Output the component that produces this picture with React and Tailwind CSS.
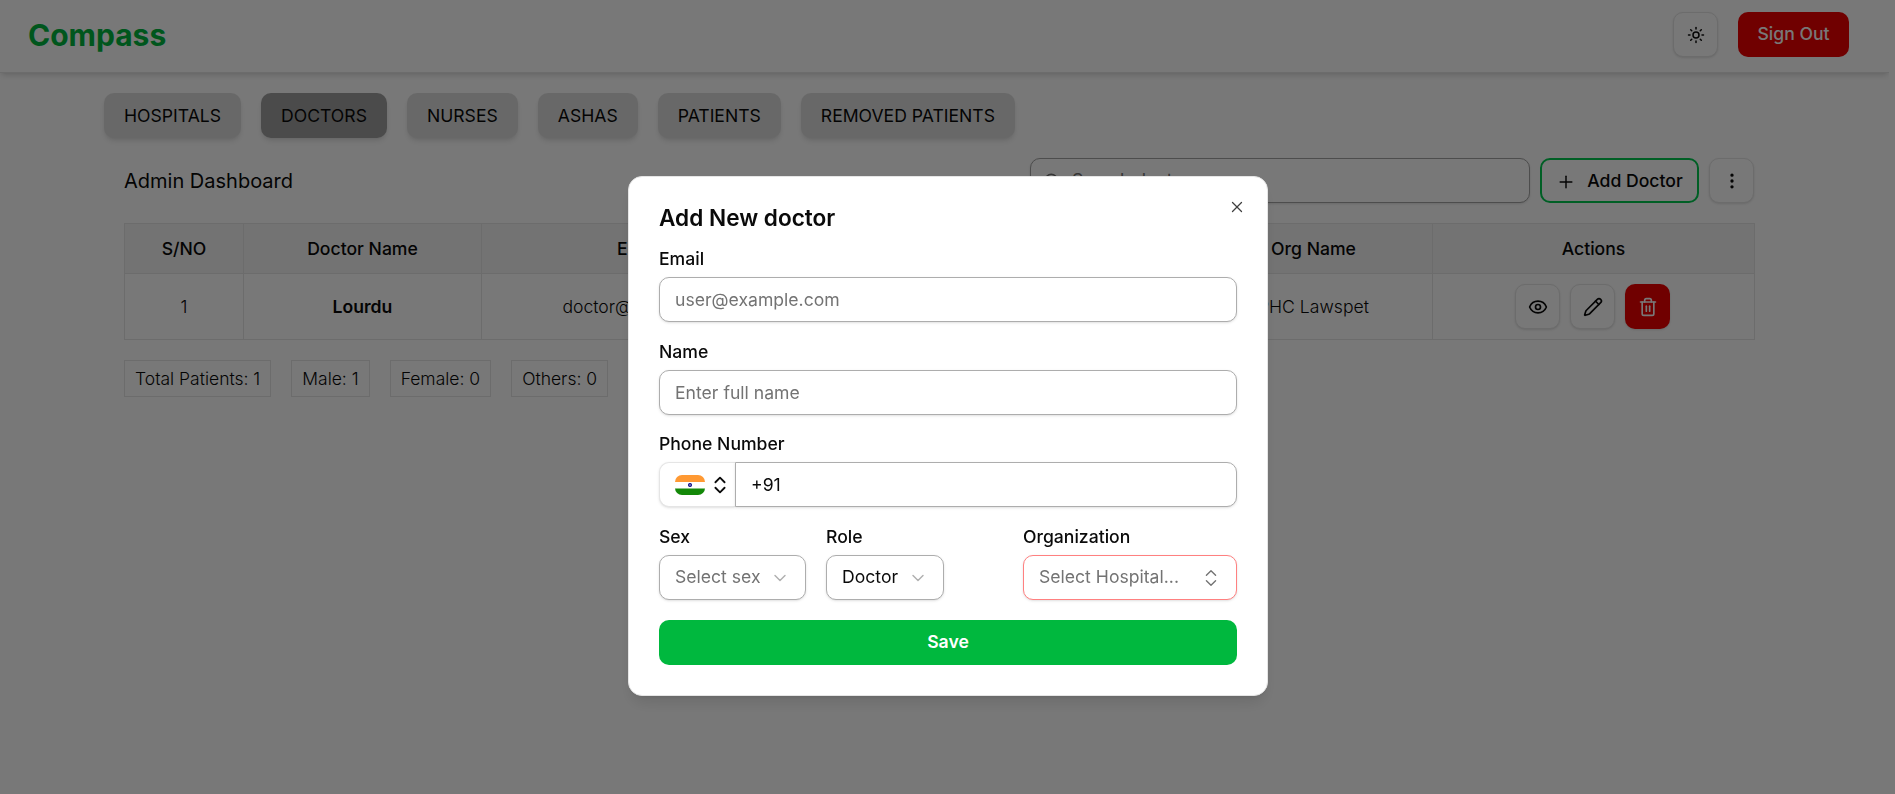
import React from 'react';
import { ChevronDown, ChevronsUpDown, EllipsisVertical, Eye, Pencil, Plus, Search, Sun, Trash2, X } from 'lucide-react';

const tabs = ['HOSPITALS', 'DOCTORS', 'NURSES', 'ASHAS', 'PATIENTS', 'REMOVED PATIENTS'];
const stats = ['Total Patients: 1', 'Male: 1', 'Female: 0', 'Others: 0'];
const columns = [
    { name: 'S/NO', width: 'w-[119px]' },
    { name: 'Doctor Name', width: 'w-[238px]' },
    { name: 'Email', width: 'w-[316px]' },
    { name: 'Phone', width: 'w-[203px]' },
    { name: 'Sex', width: 'w-[100px]' },
    { name: 'Role', width: 'w-[94px]' },
    { name: 'Org Name', width: 'w-[238px]' },
    { name: 'Actions', width: 'w-[322px]' },
];

const IconButton = ({ children, className = 'border border-[#e5e5e5] bg-white' }) => (
    <button className={`flex h-[45px] w-[45px] items-center justify-center rounded-[10px] shadow-sm ${className}`}>
        {children}
    </button>
);

const Field = ({ label, children, className = '' }) => (
    <div className={className}>
        <label className="block h-[25px] text-[17.6px] leading-[25px] font-medium text-[#0a0a0a]">{label}</label>
        <div className="mt-[6px]">{children}</div>
    </div>
);

const TextInput = ({ placeholder }) => (
    <input
        placeholder={placeholder}
        className="h-[45px] w-full rounded-[10px] border border-[#adadad] bg-white px-[15px] text-[17.6px] text-[#0a0a0a] shadow-sm outline-none placeholder:text-[#737373]"
    />
);

const SelectBox = ({ text, muted, className = '', icon }) => (
    <button className={`flex h-[45px] items-center justify-between rounded-[10px] border bg-white text-[17.6px] shadow-sm ${className}`}>
        <span className={`whitespace-nowrap ${muted ? 'text-[#737373]' : 'text-[#0a0a0a]'}`}>{text}</span>
        {icon}
    </button>
);

const IndiaFlag = () => (
    <svg viewBox="0 0 30 20" className="h-5 w-[30px] rounded-[7px]">
        <rect width="30" height="7" fill="#ff9933" />
        <rect y="7" width="30" height="6.5" fill="#ffffff" />
        <rect y="13.5" width="30" height="6.5" fill="#138808" />
        <circle cx="15" cy="10" r="2" fill="#000080" />
        <circle cx="15" cy="10" r="0.7" fill="#ffffff" />
    </svg>
);

const AddDoctorDialog = () => (
    <div className="fixed inset-0 z-50 bg-black/[0.53]">
        <div className="absolute top-[176px] left-[628px] w-[640px] rounded-[14px] border border-[#e5e5e5] bg-white px-[30px] pt-[26px] pb-[30px] shadow-lg">
            <button className="absolute top-[21px] right-[21px] text-[#404040]">
                <X className="h-[18px] w-[18px]" strokeWidth={1.75} />
            </button>
            <h2 className="h-[30px] text-[22.6px] leading-[30px] font-semibold text-[#0a0a0a]">Add New doctor</h2>
            <Field label="Email" className="mt-[13px]">
                <TextInput placeholder="user@example.com" />
            </Field>
            <Field label="Name" className="mt-[17px]">
                <TextInput placeholder="Enter full name" />
            </Field>
            <Field label="Phone Number" className="mt-4">
                <div className="flex h-[45px]">
                    <button className="flex w-[76px] items-center gap-1 rounded-l-[10px] border border-r-0 border-[#e5e5e5] bg-white pl-[15px] shadow-sm">
                        <IndiaFlag />
                        <ChevronsUpDown className="h-[22px] w-[22px] shrink-0 text-[#0a0a0a]" />
                    </button>
                    <input
                        defaultValue="+91"
                        className="h-[45px] flex-1 rounded-r-[10px] border border-[#adadad] bg-white px-[15px] text-[17.6px] text-[#0a0a0a] shadow-sm outline-none"
                    />
                </div>
            </Field>
            <div className="mt-[17px] flex">
                <Field label="Sex" className="w-[167px]">
                    <SelectBox
                        text="Select sex"
                        muted
                        className="w-[147px] border-[#adadad] pr-[15px] pl-[15px]"
                        icon={<ChevronDown className="h-5 w-5 text-[#b0b0b0]" strokeWidth={1.75} />}
                    />
                </Field>
                <Field label="Role" className="w-[197px]">
                    <SelectBox
                        text="Doctor"
                        className="w-[118px] border-[#adadad] pr-[15px] pl-[15px]"
                        icon={<ChevronDown className="h-5 w-5 text-[#b0b0b0]" strokeWidth={1.75} />}
                    />
                </Field>
                <Field label="Organization" className="flex-1">
                    <SelectBox
                        text="Select Hospital..."
                        muted
                        className="w-full border-[#ff8080] pr-[14px] pl-[15px]"
                        icon={<ChevronsUpDown className="h-[22px] w-[22px] text-[#737373]" strokeWidth={1.5} />}
                    />
                </Field>
            </div>
            <button className="mt-5 h-[45px] w-full rounded-[10px] bg-[#00b83e] text-[17.6px] font-semibold text-white">Save</button>
        </div>
    </div>
);

export default function App() {
    return (
        <div className="h-[794px] w-[1889px] overflow-hidden bg-white font-['Inter',sans-serif] text-[#0a0a0a]">
            <header className="flex h-[73px] items-center justify-between border-b border-[#e5e5e5] pr-10 pb-[3px] pl-7 shadow-md">
                <h1 className="text-[30px] leading-9 font-bold text-[#00b83e]">Compass</h1>
                <div className="flex items-center gap-[20px]">
                    <IconButton>
                        <Sun className="h-[18px] w-[18px]" />
                    </IconButton>
                    <button className="h-[45px] w-[111px] rounded-[10px] bg-[#ee0000] text-[17.6px] font-medium text-white">Sign Out</button>
                </div>
            </header>

            <main className="pt-5 pr-[135px] pl-[104px]">
                <div className="flex gap-5">
                    {tabs.map((tab) => (
                        <button
                            key={tab}
                            className={`h-[45px] rounded-[10px] px-5 pt-[2px] text-[17.6px] shadow-md ${tab === 'DOCTORS' ? 'bg-[#a0a0a0]' : 'bg-[#dedede]'}`}
                        >
                            {tab}
                        </button>
                    ))}
                </div>

                <div className="mt-5 pl-5">
                    <div className="flex h-[45px] items-center justify-between">
                        <span className="text-xl">Admin Dashboard</span>
                        <div className="flex items-center gap-[10px]">
                            <div className="flex h-[45px] w-[500px] items-center gap-[11px] rounded-[10px] border border-[#a3a3a3] bg-white pl-3 shadow-sm">
                                <Search className="h-[18px] w-[18px] text-[#737373]" />
                                <span className="text-[17.6px] text-[#737373]">Search doctors</span>
                            </div>
                            <button className="flex h-[45px] w-[159px] items-center justify-center gap-[11px] rounded-[10px] border-2 border-[#00c950] bg-white pt-[2px] text-[17.6px] font-medium">
                                <Plus className="h-5 w-5" strokeWidth={1.75} />
                                Add Doctor
                            </button>
                            <IconButton>
                                <EllipsisVertical className="h-5 w-5" />
                            </IconButton>
                        </div>
                    </div>

                    <table className="mt-5 w-[1630px] table-fixed border-collapse border border-[#e5e5e5] text-[17.6px]">
                        <thead>
                            <tr className="h-[50px] bg-[#f5f5f5]">
                                {columns.map((col) => (
                                    <th key={col.name} className={`${col.width} border border-[#e5e5e5] pt-[2px] font-medium`}>{col.name}</th>
                                ))}
                            </tr>
                        </thead>
                        <tbody>
                            <tr className="h-[66px]">
                                <td className="border border-[#e5e5e5] pt-[2px] text-center font-light">1</td>
                                <td className="border border-[#e5e5e5] pt-[2px] text-center font-semibold">Lourdu</td>
                                <td className="border border-[#e5e5e5] pt-[2px] text-center font-light">doctor@gmail.com</td>
                                <td className="border border-[#e5e5e5] pt-[2px] text-center font-light">+91 9876543210</td>
                                <td className="border border-[#e5e5e5] pt-[2px] text-center font-light">Male</td>
                                <td className="border border-[#e5e5e5] pt-[2px] text-center font-light">Doctor</td>
                                <td className="border border-[#e5e5e5] pt-[2px] text-center font-light">PHC Lawspet</td>
                                <td className="border border-[#e5e5e5]">
                                    <div className="flex items-center justify-center gap-[10px] pr-[2px]">
                                        <IconButton><Eye className="h-5 w-5" /></IconButton>
                                        <IconButton><Pencil className="h-5 w-5" /></IconButton>
                                        <IconButton className="bg-[#ee0000] text-white"><Trash2 className="h-5 w-5" /></IconButton>
                                    </div>
                                </td>
                            </tr>
                        </tbody>
                    </table>

                    <div className="mt-[20px] flex gap-5">
                        {stats.map((stat) => (
                            <div key={stat} className="flex h-[37px] items-center border border-[#e5e5e5] px-[10px] pt-[2px] text-[17.5px] font-light">{stat}</div>
                        ))}
                    </div>
                </div>
            </main>

            <AddDoctorDialog />
        </div>
    );
}
